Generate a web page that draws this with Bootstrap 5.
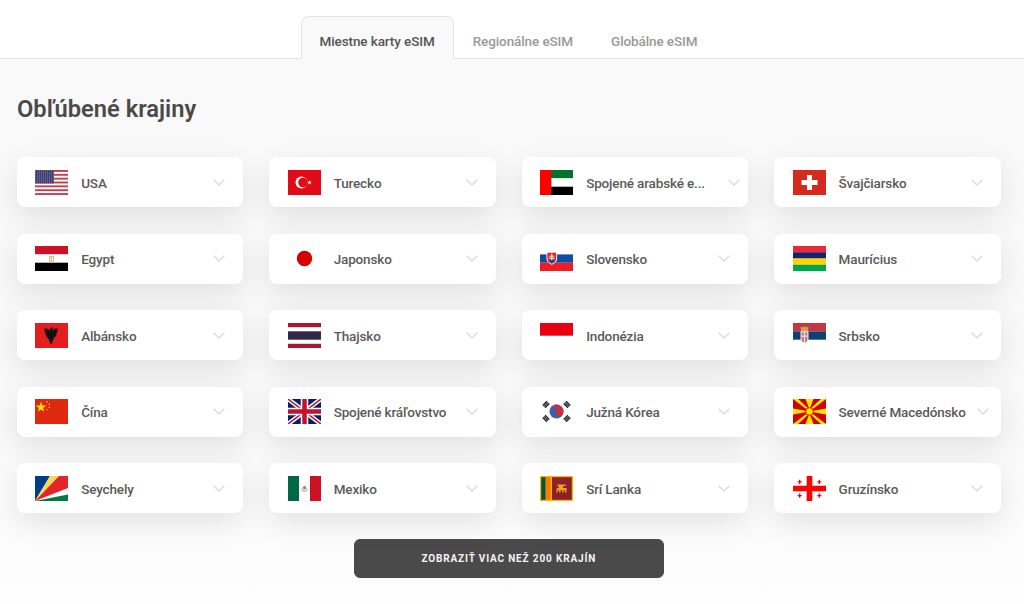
<!DOCTYPE html>
<html lang="sk">
<head>
<meta charset="utf-8">
<title>eSIM</title>
<link href="https://cdn.jsdelivr.net/npm/bootstrap@5.3.0/dist/css/bootstrap.min.css" rel="stylesheet">
<style>
body{font-family:Roboto,"Liberation Sans",sans-serif;background:linear-gradient(#f9f9f9 70%,#fefefe);color:#4a4a4a;overflow:hidden;min-height:604px}
.tab-bar{background:#fff;padding-top:16px;padding-right:7px;justify-content:center;border-bottom:1px solid #e4e4e4;--bs-nav-tabs-border-color:#e4e4e4;--bs-nav-tabs-border-radius:8px;height:59px}
.tab-bar .nav-link{font-size:13.5px;font-weight:500;color:#999;padding:0 18px;height:43px;line-height:48px;letter-spacing:-.1px}
.tab-bar .nav-link.active{color:#555;background:#f9f9f9;border-color:#e4e4e4 #e4e4e4 #f9f9f9}
.page-main{padding:0 23.4px 26px 17px}
.fav-title{font-size:23.7px;font-weight:600;color:#4a4a4a;margin:0;height:98px;padding-top:35px;line-height:30px}
.flag-row{--bs-gutter-x:26.3px;--bs-gutter-y:26.5px}
.land{height:50px;border:0;border-radius:8px;background:#fff;box-shadow:0 10px 30px rgba(0,0,0,.1);padding-left:18.2px}
.land svg.flg{width:33px;height:25px;flex:none}
.land-name{margin-left:13px;font-size:13.5px;font-weight:500;color:#5a5a5a;white-space:nowrap;letter-spacing:-.15px;padding-top:2px}
.chev{width:12px;height:7px;flex:none;margin-left:auto;margin-right:18px}
.chev.near{margin-right:12px}
.chev.nearer{margin-right:8px}
.more-btn{width:310px;height:39px;margin-top:26px;background:#4a4a4a;border-color:#4a4a4a;color:#f5f5f5;font-size:10px;font-weight:700;letter-spacing:.85px;border-radius:6px;text-transform:uppercase;padding:0}
</style>
</head>
<body>
<ul class="nav nav-tabs tab-bar">
  <li class="nav-item"><a class="nav-link active" href="#">Miestne karty eSIM</a></li>
  <li class="nav-item"><a class="nav-link" href="#">Regionálne eSIM</a></li>
  <li class="nav-item"><a class="nav-link" href="#">Globálne eSIM</a></li>
</ul>
<main class="page-main">
<h2 class="fav-title">Obľúbené krajiny</h2>
<div class="row flag-row">

<div class="col-3"><div class="card land flex-row align-items-center">
<svg class="flg" viewBox="0 0 33 25"><defs><pattern id="st" width="2" height="1.6" patternUnits="userSpaceOnUse"><rect width="2" height="1.6" fill="#3c3b6e"/><circle cx=".7" cy=".6" r=".4" fill="#b4b4d0"/></pattern></defs><rect width="33" height="25" fill="#fff"/><g fill="#c8404f"><rect width="33" height="1.92"/><rect y="3.85" width="33" height="1.92"/><rect y="7.7" width="33" height="1.92"/><rect y="11.54" width="33" height="1.92"/><rect y="15.38" width="33" height="1.92"/><rect y="19.23" width="33" height="1.92"/><rect y="23.08" width="33" height="1.92"/></g><rect width="19" height="13.46" fill="url(#st)"/></svg>
<span class="land-name">USA</span><svg class="chev" viewBox="0 0 12 7"><path d="M.7.7 6 6l5.3-5.3" fill="none" stroke="#dcdcdc" stroke-width="1.4"/></svg></div></div>

<div class="col-3"><div class="card land flex-row align-items-center">
<svg class="flg" viewBox="0 0 33 25"><rect width="33" height="25" fill="#e30a17"/><circle cx="13.5" cy="12.5" r="6" fill="#fff"/><circle cx="15" cy="12.5" r="4.8" fill="#e30a17"/><polygon fill="#fff" points="21.5,10 22.1,11.7 23.9,11.7 22.4,12.8 23,14.6 21.5,13.5 20,14.6 20.6,12.8 19.1,11.7 20.9,11.7"/></svg>
<span class="land-name">Turecko</span><svg class="chev" viewBox="0 0 12 7"><path d="M.7.7 6 6l5.3-5.3" fill="none" stroke="#dcdcdc" stroke-width="1.4"/></svg></div></div>

<div class="col-3"><div class="card land flex-row align-items-center">
<svg class="flg" viewBox="0 0 33 25"><rect width="33" height="8.4" fill="#00732f"/><rect y="8.4" width="33" height="8.3" fill="#fff"/><rect y="16.7" width="33" height="8.3" fill="#000"/><rect width="11.3" height="25" fill="#f00"/></svg>
<span class="land-name">Spojené arabské e...</span><svg class="chev nearer" viewBox="0 0 12 7"><path d="M.7.7 6 6l5.3-5.3" fill="none" stroke="#dcdcdc" stroke-width="1.4"/></svg></div></div>

<div class="col-3"><div class="card land flex-row align-items-center">
<svg class="flg" viewBox="0 0 33 25"><rect width="33" height="25" fill="#d52b1e"/><path fill="#fff" d="M14 5h5v5h5.5v5H19v5h-5v-5H8.500v-5H14z"/></svg>
<span class="land-name">Švajčiarsko</span><svg class="chev" viewBox="0 0 12 7"><path d="M.7.7 6 6l5.3-5.3" fill="none" stroke="#dcdcdc" stroke-width="1.4"/></svg></div></div>

<div class="col-3"><div class="card land flex-row align-items-center">
<svg class="flg" viewBox="0 0 33 25"><rect width="33" height="8.4" fill="#ce1126"/><rect y="8.4" width="33" height="8.3" fill="#fff"/><rect y="16.7" width="33" height="8.3" fill="#000"/><path fill="#dcc38a" d="M14 10h5v6.700h-5z"/><path fill="#fff" d="M15.400 11h.7v4.500h-.7zM17 11h.7v4.500H17z"/></svg>
<span class="land-name">Egypt</span><svg class="chev" viewBox="0 0 12 7"><path d="M.7.7 6 6l5.3-5.3" fill="none" stroke="#dcdcdc" stroke-width="1.4"/></svg></div></div>

<div class="col-3"><div class="card land flex-row align-items-center">
<svg class="flg" viewBox="0 0 33 25"><circle cx="16.500" cy="12.500" r="7.700" fill="#d60000"/></svg>
<span class="land-name">Japonsko</span><svg class="chev" viewBox="0 0 12 7"><path d="M.7.7 6 6l5.3-5.3" fill="none" stroke="#dcdcdc" stroke-width="1.4"/></svg></div></div>

<div class="col-3"><div class="card land flex-row align-items-center">
<svg class="flg" viewBox="0 0 33 25"><rect y="8.400" width="33" height="8.300" fill="#0b4ea2"/><rect y="16.700" width="33" height="8.300" fill="#ee1c25"/><path fill="#fff" d="M6.500 5.800h10.600v7c0 3-2.600 4.500-5.300 6-2.700-1.500-5.300-3-5.300-6z"/><path fill="#ee1c25" d="M7.400 6.700h8.800v6c0 2.500-2.200 3.800-4.400 5-2.200-1.200-4.400-2.500-4.400-5z"/><path fill="#fff" d="M11.300 7.700h1v2h2v1h-2v1h2.500v1h-2.500v2.200h-1v-2.200H8.800v-1h2.500v-1h-2v-1h2z"/><path fill="#0b4ea2" d="M8.200 15c1-1 2-1 2.400-.4.700-.8 1.700-.8 2.400 0 .5-.6 1.500-.6 2.400.4-1 1.200-2.300 2-3.600 2.600-1.300-.6-2.600-1.400-3.600-2.600z"/></svg>
<span class="land-name">Slovensko</span><svg class="chev" viewBox="0 0 12 7"><path d="M.7.7 6 6l5.3-5.3" fill="none" stroke="#dcdcdc" stroke-width="1.4"/></svg></div></div>

<div class="col-3"><div class="card land flex-row align-items-center">
<svg class="flg" viewBox="0 0 33 25"><rect width="33" height="6.300" fill="#ea2839"/><rect y="6.250" width="33" height="6.300" fill="#1a206d"/><rect y="12.500" width="33" height="6.300" fill="#ffd500"/><rect y="18.750" width="33" height="6.250" fill="#00a551"/></svg>
<span class="land-name">Maurícius</span><svg class="chev" viewBox="0 0 12 7"><path d="M.7.7 6 6l5.3-5.3" fill="none" stroke="#dcdcdc" stroke-width="1.4"/></svg></div></div>

<div class="col-3"><div class="card land flex-row align-items-center">
<svg class="flg" viewBox="0 0 33 25"><rect width="33" height="25" fill="#e41e20"/><path fill="#111" d="M16 4.500h1.300l.7 1.500-.9.800.5 1.200 1.600-2.700.4 1.400 1.500-2 .2 1.600 1.300-1.200c.2 2.400-.3 4.300-1.300 5.800.4.300.3 1-.4 1.700-.1.900-.9 1.700-1.800 2 .3.600-.2 1.300-1.100 1.500l.4 1.300-.9.300-.4 1.900-1.100 1.800-1.100-1.800-.4-1.900-.9-.3.400-1.300c-.9-.2-1.400-.9-1.100-1.500-.9-.3-1.700-1.100-1.800-2-.7-.7-.8-1.400-.4-1.700-1-1.500-1.500-3.400-1.300-5.800l1.300 1.200.2-1.600 1.500 2 .4-1.400 1.600 2.700.5-1.700z"/></svg>
<span class="land-name">Albánsko</span><svg class="chev" viewBox="0 0 12 7"><path d="M.7.7 6 6l5.3-5.3" fill="none" stroke="#dcdcdc" stroke-width="1.4"/></svg></div></div>

<div class="col-3"><div class="card land flex-row align-items-center">
<svg class="flg" viewBox="0 0 33 25"><rect width="33" height="4.200" fill="#a51931"/><rect y="8.300" width="33" height="8.400" fill="#2d2a4a"/><rect y="20.800" width="33" height="4.200" fill="#a51931"/></svg>
<span class="land-name">Thajsko</span><svg class="chev" viewBox="0 0 12 7"><path d="M.7.7 6 6l5.3-5.3" fill="none" stroke="#dcdcdc" stroke-width="1.4"/></svg></div></div>

<div class="col-3"><div class="card land flex-row align-items-center">
<svg class="flg" viewBox="0 0 33 25"><rect width="33" height="12.700" fill="#e70011"/></svg>
<span class="land-name">Indonézia</span><svg class="chev" viewBox="0 0 12 7"><path d="M.7.7 6 6l5.3-5.3" fill="none" stroke="#dcdcdc" stroke-width="1.4"/></svg></div></div>

<div class="col-3"><div class="card land flex-row align-items-center">
<svg class="flg" viewBox="0 0 33 25"><rect width="33" height="8.400" fill="#c6363c"/><rect y="8.400" width="33" height="8.300" fill="#0c4076"/><path fill="#c7a25a" d="M7.500 3.500l1.500 1 1-1.300 1.500 1 1.500-1 1 1.300 1.500-1-.6 4.800H8.100z"/><path fill="#f3e6e6" d="M7.500 8.300h8v8.700c0 1.800-2 3-4 3.600-2-.6-4-1.800-4-3.600z"/><path fill="#d46a6e" d="M8.700 9.500h5.600v7.200c0 1.300-1.400 2.200-2.800 2.700-1.400-.5-2.800-1.400-2.800-2.700z"/><path fill="#f3e6e6" d="M10.900 9.500h1.200v9.900h-1.200zM8.700 12.500h5.600v1.200H8.700z"/></svg>
<span class="land-name">Srbsko</span><svg class="chev" viewBox="0 0 12 7"><path d="M.7.7 6 6l5.3-5.3" fill="none" stroke="#dcdcdc" stroke-width="1.4"/></svg></div></div>

<div class="col-3"><div class="card land flex-row align-items-center">
<svg class="flg" viewBox="0 0 33 25"><rect width="33" height="25" fill="#de2910"/><polygon fill="#ffde00" points="6,2.600 7.300,6.500 11.400,6.500 8.100,8.900 9.300,12.800 6,10.400 2.700,12.800 3.900,8.900 .6,6.500 4.700,6.500"/><g fill="#ffde00"><circle cx="12" cy="2.800" r=".7"/><circle cx="14.200" cy="5.200" r=".7"/><circle cx="14.200" cy="8.300" r=".7"/><circle cx="12" cy="10.600" r=".7"/></g></svg>
<span class="land-name">Čína</span><svg class="chev" viewBox="0 0 12 7"><path d="M.7.7 6 6l5.3-5.3" fill="none" stroke="#dcdcdc" stroke-width="1.4"/></svg></div></div>

<div class="col-3"><div class="card land flex-row align-items-center">
<svg class="flg" viewBox="0 0 33 25"><rect width="33" height="25" fill="#012169"/><path stroke="#fff" stroke-width="4.500" d="M0 0l33 25M33 0 0 25"/><path stroke="#c8102e" stroke-width="1.500" d="M0 0l33 25M33 0 0 25"/><path stroke="#fff" stroke-width="7.500" d="M16.500 0v25M0 12.500h33"/><path stroke="#c8102e" stroke-width="4.500" d="M16.500 0v25M0 12.500h33"/></svg>
<span class="land-name">Spojené kráľovstvo</span><svg class="chev" viewBox="0 0 12 7"><path d="M.7.7 6 6l5.3-5.3" fill="none" stroke="#dcdcdc" stroke-width="1.4"/></svg></div></div>

<div class="col-3"><div class="card land flex-row align-items-center">
<svg class="flg" viewBox="0 0 33 25"><circle cx="16.500" cy="12.500" r="7" fill="#3e5fa8"/><path fill="#cd2e3a" d="M9.500 12.500a7 7 0 0 1 14 0 3.500 3.500 0 0 1-7 0 3.500 3.500 0 0 0-7 0z" transform="rotate(20 16.500 12.500)"/><g stroke="#222" stroke-width="1.300" fill="none"><path transform="translate(6 5.500) rotate(-45)" d="M-3-1.700h6M-3 0h6M-3 1.700h6"/><path transform="translate(27 5.500) rotate(45)" d="M-3-1.700h6M-3 0h6M-3 1.700h6"/><path transform="translate(6 19.500) rotate(45)" d="M-3-1.700h6M-3 0h6M-3 1.700h6"/><path transform="translate(27 19.500) rotate(-45)" d="M-3-1.700h6M-3 0h6M-3 1.700h6"/></g></svg>
<span class="land-name">Južná Kórea</span><svg class="chev" viewBox="0 0 12 7"><path d="M.7.7 6 6l5.3-5.3" fill="none" stroke="#dcdcdc" stroke-width="1.4"/></svg></div></div>

<div class="col-3"><div class="card land flex-row align-items-center">
<svg class="flg" viewBox="0 0 33 25"><rect width="33" height="25" fill="#d20000"/><path fill="#ffe600" d="M0 0h5l11.500 10.500L12.500 0h8l-4 10.500L28 0h5L16.500 12.500 33 9.500v6l-16.500-3L33 25h-5L16.500 14.500l4 10.500h-8l4-10.500L5 25H0l16.500-12.500L0 15.500v-6l16.500 3z"/><circle cx="16.500" cy="12.500" r="4.100" fill="#d20000"/><circle cx="16.500" cy="12.500" r="3.300" fill="#ffe600"/></svg>
<span class="land-name">Severné Macedónsko</span><svg class="chev near" viewBox="0 0 12 7"><path d="M.7.7 6 6l5.3-5.3" fill="none" stroke="#dcdcdc" stroke-width="1.4"/></svg></div></div>

<div class="col-3"><div class="card land flex-row align-items-center">
<svg class="flg" viewBox="0 0 33 25"><rect width="33" height="25" fill="#fff"/><path fill="#003f87" d="M0 25V0h15z"/><path fill="#fcd856" d="M0 25 15 0h9z"/><path fill="#e3242b" d="M0 25 24 0h9v12z"/><path fill="#007a3d" d="M0 25 33 18.500V25z"/></svg>
<span class="land-name">Seychely</span><svg class="chev" viewBox="0 0 12 7"><path d="M.7.7 6 6l5.3-5.3" fill="none" stroke="#dcdcdc" stroke-width="1.4"/></svg></div></div>

<div class="col-3"><div class="card land flex-row align-items-center">
<svg class="flg" viewBox="0 0 33 25"><rect width="11" height="25" fill="#006847"/><rect x="22" width="11" height="25" fill="#ce1126"/><path fill="#a9b48c" d="M13.300 12.500a3.200 3.200 0 0 0 6.400 0l-.8-.2a2.400 2.400 0 0 1-4.800 0z"/><circle cx="16.500" cy="11.800" r="1.700" fill="#a8805a"/></svg>
<span class="land-name">Mexiko</span><svg class="chev" viewBox="0 0 12 7"><path d="M.7.7 6 6l5.3-5.3" fill="none" stroke="#dcdcdc" stroke-width="1.4"/></svg></div></div>

<div class="col-3"><div class="card land flex-row align-items-center">
<svg class="flg" viewBox="0 0 33 25"><rect width="33" height="25" fill="#ffb700"/><rect x="1.200" y="1.200" width="4.500" height="22.600" fill="#005641"/><rect x="5.700" y="1.200" width="5" height="22.600" fill="#ff7b00"/><rect x="12" y="1.200" width="19.800" height="22.600" fill="#8d2029"/><path fill="#e8a91c" d="M17.500 8.500h8v1.400h-2.500v2h3.500v4.600H25v-2.200h-1.300v2.200h-1.400v-2.200h-1.800v2.200h-1.400v-2.200h-1.300v2.200h-1.300v-4.200h2.300v-2h-1.300z"/></svg>
<span class="land-name">Srí Lanka</span><svg class="chev" viewBox="0 0 12 7"><path d="M.7.7 6 6l5.3-5.3" fill="none" stroke="#dcdcdc" stroke-width="1.4"/></svg></div></div>

<div class="col-3"><div class="card land flex-row align-items-center">
<svg class="flg" viewBox="0 0 33 25"><path fill="#f00" d="M13.700 0h5.600v9.700H33v5.600H19.300V25h-5.600V15.300H0V9.700h13.700z"/><path fill="#f00" d="M6 3.800h1.300v1.400h1.400v1.300H7.300v1.400H6V6.500H4.600V5.200H6zM25.700 3.800H27v1.400h1.400v1.300H27v1.400h-1.300V6.500h-1.400V5.200h1.400zM6 17.600h1.300V19h1.400v1.300H7.300v1.400H6v-1.400H4.600V19H6zM25.700 17.600H27V19h1.400v1.300H27v1.400h-1.300v-1.400h-1.400V19h1.400z"/></svg>
<span class="land-name">Gruzínsko</span><svg class="chev" viewBox="0 0 12 7"><path d="M.7.7 6 6l5.3-5.3" fill="none" stroke="#dcdcdc" stroke-width="1.4"/></svg></div></div>

</div>
<div class="d-flex justify-content-center"><button type="button" class="btn more-btn">Zobraziť viac než 200 krajín</button></div>
</main>
<script src="https://cdn.jsdelivr.net/npm/bootstrap@5.3.0/dist/js/bootstrap.bundle.min.js"></script>
</body>
</html>
